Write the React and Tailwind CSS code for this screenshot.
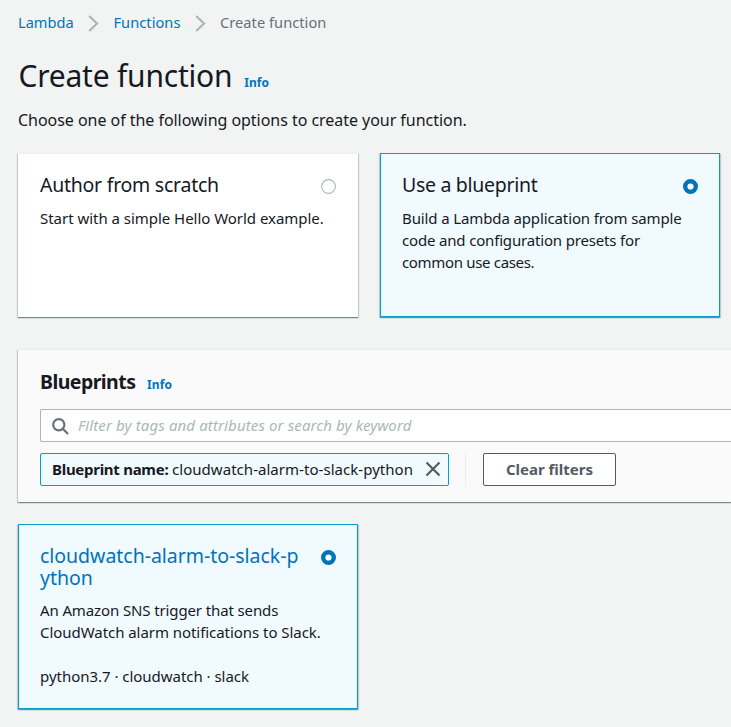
const Chevron = () => (
  <svg width="11" height="17" viewBox="0 0 11 17" fill="none" stroke="#aab7b8" strokeWidth="2.2">
    <path d="M1.2 1 L9 8.5 L1.2 16" />
  </svg>
);

const Radio = ({ on }) => (
  <svg className="mt-[5px] shrink-0" width="15" height="15" viewBox="0 0 15 15">
    {on ? (
      <circle cx="7.5" cy="7.5" r="5.3" fill="#fff" stroke="#0073bb" strokeWidth="4.4" />
    ) : (
      <circle cx="7.5" cy="7.5" r="6.9" fill="#fff" stroke="#aab7b8" strokeWidth="1.1" />
    )}
  </svg>
);

const SHADOW =
  'shadow-[0_1px_1px_0_rgba(0,28,36,0.3),1px_1px_1px_0_rgba(0,28,36,0.15),-1px_1px_1px_0_rgba(0,28,36,0.15)]';

const Card = ({ selected, className, title, bodyClass = 'mt-[11px]', children }) => (
  <div
    className={`w-[340px] border pl-[21px] pr-[21px] pt-5 ${SHADOW} ${
      selected ? 'border-[#00a1c9] bg-[#f1faff]' : 'border-x-white border-b-white border-t-[#eaeded] bg-white'
    } ${className}`}
  >
    <div className="flex items-start justify-between">
      <h2 className="text-[19.5px] leading-[22px]">{title}</h2>
      <Radio on={selected} />
    </div>
    <div className={`whitespace-nowrap ${bodyClass}`}>{children}</div>
  </div>
);

export default function App() {
  return (
    <div className="h-[727px] w-[731px] overflow-hidden bg-[#f2f3f3] font-['Noto_Sans',sans-serif] text-[15px] leading-[22px] text-[#16191f]">
      <nav className="flex h-[46px] items-center pl-[18px] text-[14.6px] text-[#0073bb]">
        <span className="w-[56px] pb-0.5">Lambda</span>
        <span className="ml-[14px] mr-[14.5px] w-[11px]"><Chevron /></span>
        <span className="w-[67px] pb-0.5 tracking-[0.05px]">Functions</span>
        <span className="ml-[14px] mr-[14.5px] w-[11px]"><Chevron /></span>
        <span className="pb-0.5 tracking-[0.05px] text-[#687078]">Create function</span>
      </nav>
      <h1 className="flex h-[63px] items-baseline pl-[18.5px] pt-2 leading-[44px]">
        <span className="text-[30px] tracking-[-0.22px]">Create function</span>
        <span className="ml-[12px] text-[12px] font-bold text-[#0073bb]">Info</span>
      </h1>
      <p className="h-11 pl-[18px] text-[16px] tracking-[-0.04px]">
        Choose one of the following options to create your function.
      </p>

      <div className="flex gap-[22px] pl-[18px]">
        <Card className="h-[164px]" title={<span className="tracking-[-0.26px]">Author from scratch</span>}>
          <p className="tracking-[-0.03px]">Start with a simple Hello World example.</p>
        </Card>
        <Card selected className="h-[164px]" title={<span className="tracking-[-0.3px]">Use a blueprint</span>}>
          <p className="tracking-[-0.12px]">Build a Lambda application from sample</p>
          <p className="tracking-[-0.17px]">code and configuration presets for</p>
          <p className="tracking-[-0.33px]">common use cases.</p>
        </Card>
      </div>

      <section className={`ml-[18px] mt-8 h-[153px] border-t border-[#eaeded] bg-[#fafafa] pl-[22px] pt-[21px] ${SHADOW}`}>
        <h2 className="flex h-[38px] items-baseline">
          <span className="text-[19.5px] font-bold tracking-[-0.55px]">Blueprints</span>
          <span className="ml-[11.5px] text-[12px] font-bold tracking-[0.2px] text-[#0073bb]">Info</span>
        </h2>
        <div className="flex h-[33px] items-center rounded-l-[2px] border border-r-0 border-[#aab7b8] bg-white pl-[11px]">
          <svg className="mt-px" width="17" height="17" viewBox="0 0 17 17" fill="none" stroke="#687078" strokeWidth="2.2">
            <circle cx="6.8" cy="6.8" r="5.6" />
            <path d="M10.8 10.8 L16 16" />
          </svg>
          <span className="ml-[9px] pb-0.5 italic tracking-[0.12px] text-[#aab7b8]">
            Filter by tags and attributes or search by keyword
          </span>
        </div>
        <div className="mt-[11px] flex h-[33px]">
          <div className="flex w-[409px] items-center whitespace-nowrap rounded-[2px] border border-[#00a1c9] bg-[#f1faff] pl-[11px]">
            <span className="w-[120px] pb-0.5 font-bold tracking-[-0.28px]">Blueprint name:</span>
            <span className="w-[242px] pb-0.5 tracking-[0.04px]">cloudwatch-alarm-to-slack-python</span>
            <svg className="-mt-px ml-[11px]" width="16" height="16" viewBox="0 0 16 16" fill="none" stroke="#545b64" strokeWidth="2.2">
              <path d="M1.5 1.5 L14.5 14.5 M14.5 1.5 L1.5 14.5" />
            </svg>
          </div>
          <div className="ml-4 w-px bg-[#eaeded]" />
          <button className="ml-[17px] w-[133px] rounded-[2px] border border-[#545b64] bg-white pb-0.5 font-bold text-[#545b64]">
            Clear filters
          </button>
        </div>
      </section>

      <div className="mt-[22px] pl-[18px]">
        <Card
          selected
          className="h-[185px]"
          bodyClass="mt-[10px]"
          title={<span className="block w-[262px] break-all tracking-[-0.03px] text-[#0073bb]">cloudwatch-alarm-to-slack-python</span>}
        >
          <p className="tracking-[-0.12px]">An Amazon SNS trigger that sends</p>
          <p className="tracking-[-0.05px]">CloudWatch alarm notifications to Slack.</p>
          <p className="mt-[22px] tracking-[-0.03px]">python3.7 · cloudwatch · slack</p>
        </Card>
      </div>
    </div>
  );
}
